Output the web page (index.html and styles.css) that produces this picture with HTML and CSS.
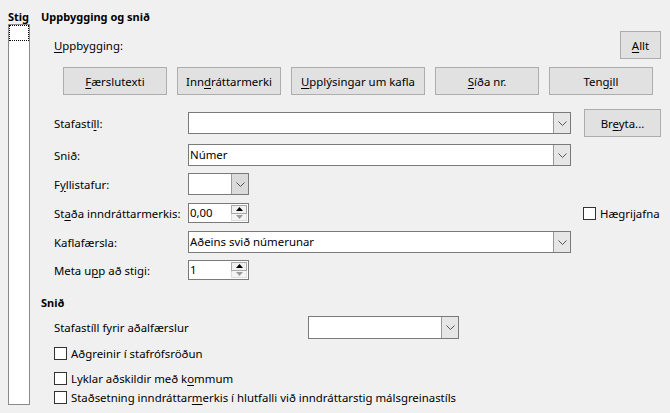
FILE: index.html
```html
<!DOCTYPE html>
<html lang="is">
<head>
<meta charset="utf-8">
<title>Uppbygging og snið</title>
<link rel="stylesheet" href="styles.css">
</head>
<body>
<div class="dlg">
  <div class="levels">
    <div class="lv-title">Stig</div>
    <div class="lv-list"><div class="lv-focus"></div></div>
  </div>
  <div class="main">
    <div class="heading">Uppbygging og snið</div>
    <div class="struct-row">
      <span class="struct-label"><u>U</u>ppbygging:</span>
      <button class="btn btn-allt"><u>A</u>llt</button>
    </div>
    <div class="btn-row">
      <button class="btn w104"><u>F</u>ærslutexti</button>
      <button class="btn w104">Inn<u>d</u>ráttarmerki</button>
      <button class="btn w134"><u>U</u>pplýsingar um kafla</button>
      <button class="btn w104"><u>S</u>íða nr.</button>
      <button class="btn w104">Teng<u>i</u>ll</button>
    </div>

    <div class="row r-style">
      <span class="row-label">Stafastí<u>l</u>l:</span>
      <div class="combo wide h22">
        <span class="combo-text"></span>
        <span class="combo-btn"><svg width="9" height="5" viewBox="0 0 9 5"><path d="M0.5 0.5 L4.5 4.5 L8.5 0.5" fill="none" stroke="#555" stroke-width="1"/></svg></span>
      </div>
      <button class="btn btn-breyta">Br<u>e</u>yta...</button>
    </div>

    <div class="row r-snid">
      <span class="row-label">Snið:</span>
      <div class="combo wide h22">
        <span class="combo-text">Númer</span>
        <span class="combo-btn"><svg width="9" height="5" viewBox="0 0 9 5"><path d="M0.5 0.5 L4.5 4.5 L8.5 0.5" fill="none" stroke="#555" stroke-width="1"/></svg></span>
      </div>
    </div>

    <div class="row r-fyll">
      <span class="row-label">F<u>y</u>llistafur:</span>
      <div class="combo narrow h22">
        <span class="combo-text"></span>
        <span class="combo-btn dark"><svg width="9" height="5" viewBox="0 0 9 5"><path d="M0.5 0.5 L4.5 4.5 L8.5 0.5" fill="none" stroke="#555" stroke-width="1"/></svg></span>
      </div>
    </div>

    <div class="row r-stada">
      <span class="row-label">St<u>a</u>ða inndráttarmerkis:</span>
      <div class="spin">
        <span class="spin-text">0,00</span>
        <span class="spin-btns">
          <span class="spin-up"><svg width="7" height="4" viewBox="0 0 7 4"><path d="M0 4 L3.5 0 L7 4 Z" fill="#000"/></svg></span>
          <span class="spin-down"><svg width="7" height="4" viewBox="0 0 7 4"><path d="M0 0 L3.5 4 L7 0 Z" fill="#9a9a9a"/></svg></span>
        </span>
      </div>
      <label class="check right-check"><span class="box"></span>Hægrijafna</label>
    </div>

    <div class="row r-kafla">
      <span class="row-label">Kaflafærsla:</span>
      <div class="combo wide h22">
        <span class="combo-text">Aðeins svið númerunar</span>
        <span class="combo-btn"><svg width="9" height="5" viewBox="0 0 9 5"><path d="M0.5 0.5 L4.5 4.5 L8.5 0.5" fill="none" stroke="#555" stroke-width="1"/></svg></span>
      </div>
    </div>

    <div class="row r-meta">
      <span class="row-label">Meta u<u>p</u>p að stigi:</span>
      <div class="spin">
        <span class="spin-text">1</span>
        <span class="spin-btns">
          <span class="spin-up"><svg width="7" height="4" viewBox="0 0 7 4"><path d="M0 4 L3.5 0 L7 4 Z" fill="#000"/></svg></span>
          <span class="spin-down"><svg width="7" height="4" viewBox="0 0 7 4"><path d="M0 0 L3.5 4 L7 0 Z" fill="#9a9a9a"/></svg></span>
        </span>
      </div>
    </div>

    <div class="heading heading-snid">Snið</div>

    <div class="row r-main-style">
      <span class="row-label long">Stafastíll fyrir aðalfærslur</span>
      <div class="combo medium h23">
        <span class="combo-text"></span>
        <span class="combo-btn"><svg width="9" height="5" viewBox="0 0 9 5"><path d="M0.5 0.5 L4.5 4.5 L8.5 0.5" fill="none" stroke="#555" stroke-width="1"/></svg></span>
      </div>
    </div>

    <label class="check c1"><span class="box"></span>Aðgreinir í stafrófsröðun</label>
    <label class="check c2"><span class="box"></span>Lyklar aðskildir með k<u>o</u>mmum</label>
    <label class="check c3"><span class="box"></span>Staðsetning inndráttar<u>m</u>erkis í hlutfalli við inndráttarstig málsgreinastíls</label>
  </div>
</div>
</body>
</html>
```

FILE: styles.css
```css
* { box-sizing: border-box; }

body {
  margin: 0;
  width: 670px;
  height: 413px;
  overflow: hidden;
  background: #f0f0f0;
  font-family: "Noto Sans", "Open Sans", sans-serif;
  font-size: 11.4px;
  color: #000;
}

u { text-decoration: underline; text-underline-offset: 2px; }

.dlg {
  display: flex;
  padding-left: 8px;
}

.levels {
  width: 22px;
  display: flex;
  flex-direction: column;
}

.lv-title {
  font-weight: bold;
  font-size: 11px;
  height: 24px;
  padding-top: 9px;
  line-height: 16px;
  white-space: nowrap;
}

.lv-list {
  height: 381px;
  background: #fff;
  border: 1px solid #8a8a8a;
}

.lv-focus {
  height: 16px;
  border: 1px dotted #000;
}

.main {
  margin-left: 11px;
  width: 620px;
  display: flex;
  flex-direction: column;
}

.heading {
  font-weight: bold;
  font-size: 11px;
  height: 16px;
  line-height: 16px;
  margin-top: 9px;
  white-space: nowrap;
}

.struct-row {
  display: flex;
  align-items: center;
  justify-content: space-between;
  height: 28px;
  margin-top: 6px;
  padding-left: 13px;
}

.btn {
  font: inherit;
  color: #000;
  background: #e1e1e1;
  border: 1px solid #adadad;
  height: 28px;
  padding: 0;
  margin: 0;
  white-space: nowrap;
}

.btn-allt { width: 41px; }
.w104 { width: 104px; }
.w134 { width: 134px; }

.btn-row {
  display: flex;
  gap: 10px;
  margin-top: 8px;
  padding-left: 22px;
}

.row {
  display: flex;
  align-items: center;
  padding-left: 13px;
}

.row-label {
  width: 134px;
  white-space: nowrap;
}

.row-label.long { width: 254px; }

.r-style { height: 28px; margin-top: 14px; }
.r-snid { height: 22px; margin-top: 7px; }
.r-fyll { height: 22px; margin-top: 7px; }
.r-stada { height: 20px; margin-top: 8px; }
.r-kafla { height: 22px; margin-top: 8px; }
.r-meta { height: 20px; margin-top: 7px; }
.heading-snid { margin-top: 15px; }
.r-main-style { height: 23px; margin-top: 5px; }

.combo {
  display: flex;
  background: #fff;
  border: 1px solid #7a7a7a;
}

.h22 { height: 22px; }
.h23 { height: 23px; }
.wide { width: 383px; }
.narrow { width: 61px; }
.medium { width: 151px; }

.combo-text {
  flex: 1;
  padding-left: 1px;
  line-height: 20px;
  white-space: nowrap;
  overflow: hidden;
}

.combo-btn {
  width: 17px;
  background: #e6e6e6;
  border-left: 1px solid #9a9a9a;
  display: flex;
  align-items: center;
  justify-content: center;
}

.combo-btn.dark { background: #dadada; }

.btn-breyta {
  width: 77px;
  margin-left: 13px;
}

.spin {
  display: flex;
  width: 61px;
  height: 20px;
  background: #fff;
  border: 1px solid #7a7a7a;
}

.spin-text {
  flex: 1;
  padding-left: 1px;
  line-height: 18px;
}

.spin-btns {
  width: 16px;
  margin: 1px 1px 1px 0;
  display: flex;
  flex-direction: column;
}

.spin-up, .spin-down {
  flex: 1;
  display: flex;
  align-items: center;
  justify-content: center;
}

.spin-up {
  background: #f0f0f0;
  border: 1px solid #a8a8a8;
}

.spin-down {
  background: #f4f4f4;
  border: 1px solid #dcdcdc;
  border-top: none;
}

.check {
  display: flex;
  align-items: center;
  height: 13px;
  white-space: nowrap;
}

.box {
  width: 13px;
  height: 13px;
  background: #fff;
  border: 1px solid #333;
  margin-right: 4px;
  flex: none;
}

.right-check { margin-left: 334px; }

.c1 { margin-top: 8px; margin-left: 13px; }
.c2 { margin-top: 12px; margin-left: 13px; }
.c3 { margin-top: 6px; margin-left: 13px; }
```
